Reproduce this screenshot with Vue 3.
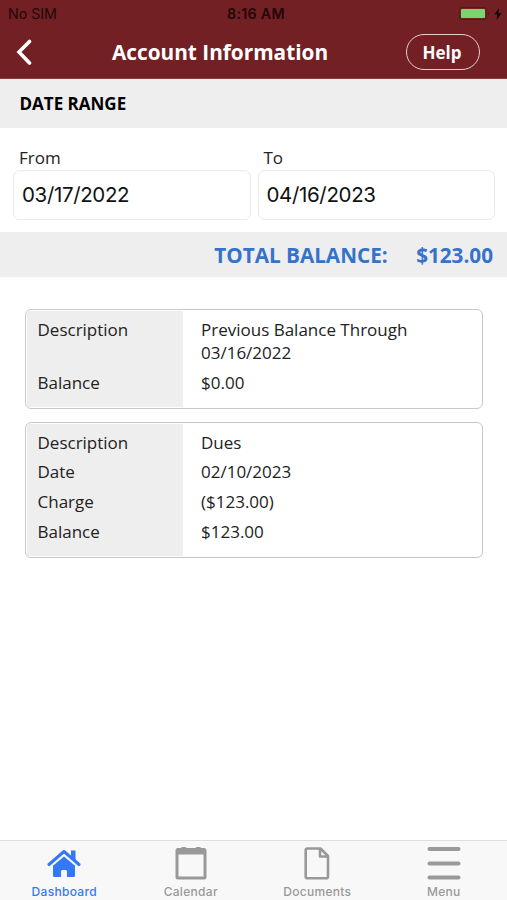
<template>
  <div class="app-screen">
    <header class="app-header">
      <div class="status-bar">
        <span class="carrier">No SIM</span>
        <span class="clock">8:16 AM</span>
        <span class="power">
          <svg class="battery" width="31" height="13" viewBox="0 0 31 13">
            <rect x="0.5" y="0.5" width="27" height="12" rx="2.5" fill="none" stroke="#59181c" />
            <rect x="2" y="2" width="24" height="9" rx="1" fill="#78d672" />
            <path d="M29 4.5v4c1-.4 1.4-1.1 1.4-2s-.4-1.6-1.4-2z" fill="#59181c" />
          </svg>
          <svg class="bolt" width="8" height="12" viewBox="0 0 8 12">
            <path d="M5 0 .5 6.600h2.800L2.500 12 7.500 5H4.400z" fill="#160607" />
          </svg>
        </span>
      </div>
      <div class="title-bar">
        <button class="back-button" aria-label="Back">
          <svg width="18" height="28" viewBox="0 0 18 28">
            <path d="M15.500 3.500 5 14l10.500 11" fill="none" stroke="#fff" stroke-width="3.600" stroke-linecap="round" />
          </svg>
        </button>
        <h1 class="title">Account Information</h1>
        <button class="help-button">Help</button>
      </div>
    </header>

    <main class="content">
      <h2 class="section-title">DATE RANGE</h2>

      <div class="date-range">
        <label class="date-field">
          <span>From</span>
          <input v-model="fromDate" type="text">
        </label>
        <label class="date-field">
          <span>To</span>
          <input v-model="toDate" type="text">
        </label>
      </div>

      <div class="total">
        <span>TOTAL BALANCE:</span>
        <span class="total-value">{{ totalBalance }}</span>
      </div>

      <div class="entries">
        <div v-for="(entry, index) in entries" :key="index" class="entry">
          <div v-for="row in entry" :key="row.label" class="entry-row">
            <div class="entry-label">{{ row.label }}</div>
            <div class="entry-value">{{ row.value }}</div>
          </div>
        </div>
      </div>
    </main>

    <nav class="tab-bar">
      <a
        v-for="tab in tabs"
        :key="tab"
        href="#"
        :class="['tab', { active: activeTab === tab }]"
        @click.prevent="activeTab = tab"
      >
        <svg v-if="tab === 'Dashboard'" width="34" height="34" viewBox="0 0 34 34">
          <path d="M2 18.500 17 5.500l15 13" fill="none" stroke="currentColor" stroke-width="3" stroke-linejoin="round" stroke-linecap="round" />
          <path d="M24 4.500h4.500v11L24 11.500zM17 10.500l11 9.300V29.500a1.500 1.500 0 0 1-1.500 1.500H20v-5.500a1.500 1.500 0 0 0-1.500-1.500h-3a1.500 1.500 0 0 0-1.500 1.500V31H7.500A1.500 1.500 0 0 1 6 29.500V19.800z" fill="currentColor" />
        </svg>
        <svg v-else-if="tab === 'Calendar'" width="34" height="34" viewBox="0 0 34 34">
          <path d="M4 2h3a1.500 1.500 0 0 1 1.500-1H11a1.500 1.500 0 0 1 1.500 1h9a1.500 1.500 0 0 1 1.500-1h2.500a1.500 1.500 0 0 1 1.500 1h3a2.500 2.500 0 0 1 2.500 2.500V31a2.500 2.500 0 0 1-2.500 2.500H4A2.500 2.500 0 0 1 1.500 31V4.500A2.500 2.500 0 0 1 4 2zM4.500 8.500v22h25v-22z" fill="currentColor" fill-rule="evenodd" />
        </svg>
        <svg v-else-if="tab === 'Documents'" width="34" height="34" viewBox="0 0 34 34">
          <path d="M7.500 2.500h13l7.500 7.500V30.500a1.800 1.800 0 0 1-1.800 1.800H7.500a1.800 1.800 0 0 1-1.800-1.800V4.300A1.800 1.800 0 0 1 7.500 2.500zM20 2.500V10.500h8" fill="none" stroke="currentColor" stroke-width="2.600" stroke-linejoin="round" />
        </svg>
        <svg v-else width="34" height="34" viewBox="0 0 34 34">
          <path d="M2.500 3h29M2.500 17.500h29M2.500 31.500h29" fill="none" stroke="currentColor" stroke-width="4" stroke-linecap="round" />
        </svg>
        <span>{{ tab }}</span>
      </a>
    </nav>
  </div>
</template>

<script setup>
import { ref } from 'vue';

const fromDate = ref('03/17/2022');
const toDate = ref('04/16/2023');
const totalBalance = ref('$123.00');

const entries = ref([
  [
    { label: 'Description', value: 'Previous Balance Through 03/16/2022' },
    { label: 'Balance', value: '$0.00' },
  ],
  [
    { label: 'Description', value: 'Dues' },
    { label: 'Date', value: '02/10/2023' },
    { label: 'Charge', value: '($123.00)' },
    { label: 'Balance', value: '$123.00' },
  ],
]);

const tabs = ['Dashboard', 'Calendar', 'Documents', 'Menu'];
const activeTab = ref('Dashboard');
</script>

<style>
body {
  margin: 0;
  background-color: #fff;
}
</style>

<style scoped>
.app-screen {
  display: flex;
  flex-direction: column;
  height: 100vh;
  overflow: hidden;
  font-family: "Open Sans", "Noto Sans", sans-serif;
  color: #222;
}

.app-screen * {
  box-sizing: border-box;
}

.app-header {
  height: 79px;
  flex-shrink: 0;
  background-color: #722023;
  border-bottom: 1px solid #843b3c;
}

.status-bar {
  display: grid;
  grid-template-columns: 1fr auto 1fr;
  align-items: center;
  height: 27px;
  padding: 0 5px 0 8px;
  font-family: Inter, sans-serif;
  font-size: 14.2px;
  color: #230709;
}

.clock {
  padding-left: 2px;
  font-weight: 600;
  letter-spacing: 0.3px;
}

.power {
  display: flex;
  align-items: center;
  justify-content: flex-end;
  gap: 4.5px;
}

.title-bar {
  display: grid;
  grid-template-columns: 46px 1fr 74px;
  align-items: center;
  height: 50px;
  padding-right: 27px;
}

.back-button {
  display: flex;
  width: 46px;
  padding: 0 0 0 14px;
  border: none;
  background: none;
  cursor: pointer;
}

.title {
  margin: 0;
  padding-right: 12px;
  text-align: center;
  font-size: 20.8px;
  line-height: 28px;
  font-weight: 700;
  color: #fff;
  white-space: nowrap;
}

.help-button {
  height: 36px;
  padding: 0 2px 0 0;
  border: 1.5px solid #e5cfcf;
  border-radius: 18px;
  background: none;
  color: #fff;
  font-family: inherit;
  font-size: 17px;
  font-weight: 700;
  cursor: pointer;
}

.content {
  flex: 1;
}

.section-title {
  height: 49px;
  margin: 0;
  padding-left: 19.5px;
  background-color: #eee;
  color: #000;
  font-size: 17px;
  line-height: 49px;
  font-weight: 700;
}

.date-range {
  display: flex;
  gap: 7px;
  height: 104px;
  padding: 18px 12px 0 13px;
}

.date-field {
  flex: 1;
  font-size: 17px;
  line-height: 24px;
}

.date-field span {
  display: block;
  padding-left: 6px;
}

.date-field input {
  display: block;
  width: 100%;
  height: 50px;
  padding: 0 8px 2px;
  border: 1px solid #e9e9e9;
  border-radius: 7px;
  background-color: #fff;
  color: #111;
  font-family: Inter, sans-serif;
  font-size: 20.5px;
  letter-spacing: -0.35px;
}

.total {
  display: flex;
  align-items: center;
  justify-content: flex-end;
  gap: 28.5px;
  height: 45px;
  padding: 1px 14px 0 0;
  background-color: #eee;
  color: #3572ca;
  font-size: 20.7px;
  font-weight: 700;
}

.entries {
  display: flex;
  flex-direction: column;
  gap: 13px;
  padding: 32px 24px 0 25px;
}

.entry {
  padding: 1px;
  border: 1px solid #c8c8c8;
  border-radius: 6px;
  overflow: hidden;
}

.entry-row {
  display: flex;
  font-size: 17px;
  line-height: 23px;
}

.entry-label {
  width: 156px;
  padding: 3px 11px 3.8px 10.5px;
  background-color: #eee;
}

.entry-value {
  flex: 1;
  padding: 3px 40px 3.8px 18px;
}

.entry-row:first-child > div {
  padding-top: 6.8px;
}

.entry-row:last-child > div {
  padding-bottom: 13.2px;
}

.tab-bar {
  display: grid;
  grid-template-columns: repeat(4, 1fr);
  flex-shrink: 0;
  height: 60px;
  padding-left: 1px;
  border-top: 1px solid #dedede;
  background-color: #f8f8f8;
}

.tab {
  display: flex;
  flex-direction: column;
  align-items: center;
  padding-top: 5px;
  color: #999;
  font-family: Inter, sans-serif;
  font-size: 12px;
  line-height: 16px;
  font-weight: 500;
  letter-spacing: 0.3px;
  text-decoration: none;
}

.tab span {
  margin-top: 4px;
}

.tab.active {
  color: #3478f6;
}
</style>
